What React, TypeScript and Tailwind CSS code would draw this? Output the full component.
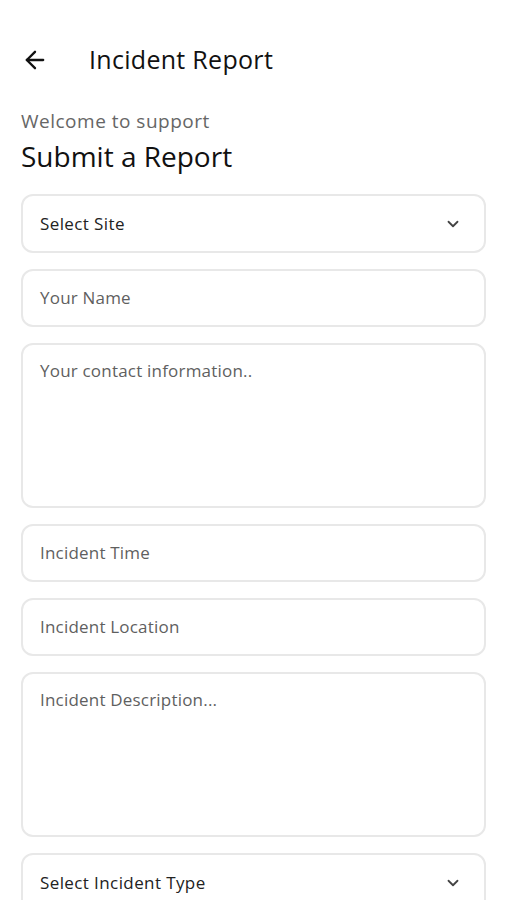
import { ArrowLeft, ChevronDown } from "lucide-react";

const font = { fontFamily: "'Open Sans', 'Noto Sans', sans-serif" };

function SelectField({ label }: { label: string }) {
  return (
    <div className="h-[59px] shrink-0 rounded-[12px] border-2 border-[#e8e8e8] flex items-center pl-[17px] pr-[22px]">
      <span className="text-[17px] text-[#222] font-medium tracking-[0.4px]">{label}</span>
      <ChevronDown className="ml-auto w-[18px] h-[18px] text-[#444]" strokeWidth={2.4} />
    </div>
  );
}

function InputField({ placeholder }: { placeholder: string }) {
  return (
    <div className="h-[58px] shrink-0 rounded-[12px] border-2 border-[#e8e8e8] flex items-center px-[17px]">
      <span className="text-[17px] text-[#5f5f5f] tracking-[0.2px]">{placeholder}</span>
    </div>
  );
}

function AreaField({ placeholder }: { placeholder: string }) {
  return (
    <div className="h-[165px] shrink-0 rounded-[12px] border-2 border-[#e8e8e8] px-[17px] pt-[13px]">
      <span className="text-[17px] text-[#5f5f5f] tracking-[0.2px]">{placeholder}</span>
    </div>
  );
}

export default function App() {
  return (
    <div className="w-[507px] h-[900px] overflow-hidden bg-white" style={font}>
      {/* header */}
      <div className="h-[60px] mt-[30px] flex items-center pl-[21px]">
        <ArrowLeft className="w-[28px] h-[28px] text-[#111]" strokeWidth={2} />
        <h1 className="ml-[40px] text-[25px] text-[#111] font-medium tracking-[0.3px]">Incident Report</h1>
      </div>

      <div className="px-[21px] pt-[18px]">
        <p className="text-[19px] text-[#666] leading-[26px] tracking-[0.5px]">Welcome to support</p>
        <h2 className="text-[28px] text-[#111] leading-[36px] mt-[4px]">Submit a Report</h2>

        <div className="flex flex-col gap-[16px] mt-[20px]">
          <SelectField label="Select Site" />
          <InputField placeholder="Your Name" />
          <AreaField placeholder="Your contact information.." />
          <InputField placeholder="Incident Time" />
          <InputField placeholder="Incident Location" />
          <AreaField placeholder="Incident Description..." />
          <SelectField label="Select Incident Type" />
        </div>
      </div>
    </div>
  );
}
